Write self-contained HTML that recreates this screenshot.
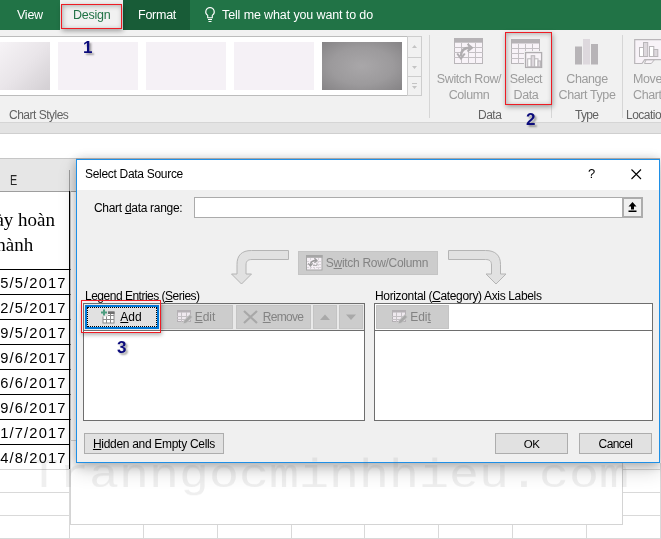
<!DOCTYPE html>
<html><head><meta charset="utf-8">
<style>
*{box-sizing:border-box;margin:0;padding:0}
html,body{width:661px;height:539px;overflow:hidden;background:#fff}
body{position:relative;font-family:"Liberation Sans",sans-serif;font-size:12px;color:#000}
.abs{position:absolute}
#tabs{left:0;top:0;width:661px;height:30px;background:#217346}
.tab{position:absolute;top:0;height:30px;line-height:31px;color:#fff;font-size:12.5px;letter-spacing:-0.25px;white-space:nowrap}
#ribbon{left:0;top:30px;width:661px;height:93px;background:#f1f1f1;border-bottom:1px solid #d5d5d5}
#gallery{left:-5px;top:36px;width:413px;height:60px;background:#fff;border:1px solid #bcbcbc}
.thumb{position:absolute;top:42px;height:48px;background:#f5f1f6}
.glabel{position:absolute;top:108px;font-size:12px;letter-spacing:-0.5px;color:#626262;white-space:nowrap}
.rbtn{position:absolute;color:#9c9c9c;font-size:12.5px;letter-spacing:-0.4px;line-height:16px;text-align:center;white-space:nowrap}
.sep{position:absolute;top:35px;height:83px;width:1px;background:#d6d6d6}
.num{position:absolute;font-weight:bold;color:#0b0b7c;font-size:17px;line-height:17px;text-shadow:2px 2px 2px rgba(0,0,0,.35)}
.redbox{position:absolute;border:1px solid #ee1c24;box-shadow:1px 2px 5px rgba(0,0,0,.35),inset 1px 1px 5px rgba(0,0,0,.28)}
#band{left:0;top:123px;width:661px;height:11px;background:#e3e3e3;border-bottom:1px solid #cfcfcf}
.cell{position:absolute;left:-2px;width:73px;height:25px;border-right:1px solid #bdbdbd;border-bottom:1px solid #000;font-size:14.7px;letter-spacing:1.15px;white-space:nowrap;overflow:hidden}
.cell:after,.hc:after{content:"";position:absolute;right:0;top:0;bottom:-1px;width:1px;background:#000}
.cell span{position:absolute;right:3.4px;top:0;line-height:27px}
.gl{position:absolute;background:#d9d9d9}
#dlg{left:76px;top:158px;width:584px;height:305px;background:#f0f0f0;border:1px solid #1e8fe6;box-shadow:0 2px 10px rgba(0,0,0,.24),0 8px 18px rgba(0,0,0,.16);letter-spacing:-0.3px}
#dlg .title{position:absolute;left:0;top:0;width:582px;height:31px;background:#fff}
.btn{position:absolute;background:#e1e1e1;border:1px solid #adadad;font-size:12px;text-align:center;line-height:19px;height:21px;white-space:nowrap}
.dis{background:#cccccc;border-color:#c4c4c4;color:#838383}
.lbl{position:absolute;font-size:12px;white-space:nowrap}
.box{position:absolute;background:#fff;border:1px solid #6e6e6e}
u{text-decoration:underline}
#wm{left:29px;top:446px;font-family:"Liberation Mono",monospace;font-size:50px;color:rgba(110,110,110,.115);white-space:nowrap;line-height:56px;transform:scaleY(.82);transform-origin:0 41.3px}
#all{position:absolute;left:0;top:0;width:661px;height:539px;will-change:transform}
</style></head><body><div id="all">

<!-- sheet -->
<div class="abs" style="left:0;top:133px;width:661px;height:406px;background:#fff"></div>
<div class="abs" style="left:0;top:158px;width:76px;height:34px;background:#e6e6e6;border-bottom:1px solid #9e9e9e;border-top:1px solid #c6c6c6"></div>
<div class="abs" style="left:69px;top:170px;width:1px;height:21px;background:#9e9e9e"></div>
<div class="abs" style="left:10px;top:171px;font-size:15px;color:#262626;transform:scaleX(.72);transform-origin:left">E</div>
<div class="abs hc" style="left:-2px;top:191px;width:73px;height:79px;border-right:1px solid #bdbdbd;border-bottom:1px solid #000;font-family:'Liberation Serif',serif;font-size:19px;line-height:25px;padding-top:16px;white-space:nowrap"><span style="position:absolute;right:15px;top:16px">ày hoàn</span><span style="position:absolute;left:-7px;top:41px">thành</span></div>
<div class="cell" style="top:270px"><span>25/5/2017</span></div>
<div class="cell" style="top:295px"><span>22/5/2017</span></div>
<div class="cell" style="top:320px"><span>29/5/2017</span></div>
<div class="cell" style="top:345px"><span>19/6/2017</span></div>
<div class="cell" style="top:370px"><span>16/6/2017</span></div>
<div class="cell" style="top:395px"><span>19/6/2017</span></div>
<div class="cell" style="top:420px"><span>11/7/2017</span></div>
<div class="cell" style="top:445px"><span>14/8/2017</span></div>
<!-- gridlines bottom -->
<div class="gl" style="left:0;top:492px;width:661px;height:1px"></div>
<div class="gl" style="left:0;top:515px;width:661px;height:1px"></div>
<div class="gl" style="left:0;top:469px;width:661px;height:1px"></div>
<div class="gl" style="left:0;top:538px;width:661px;height:1px"></div>
<div class="gl" style="left:69px;top:470px;width:1px;height:69px"></div>
<div class="gl" style="left:143px;top:470px;width:1px;height:69px"></div>
<div class="gl" style="left:217px;top:470px;width:1px;height:69px"></div>
<div class="gl" style="left:291px;top:470px;width:1px;height:69px"></div>
<div class="gl" style="left:364px;top:470px;width:1px;height:69px"></div>
<div class="gl" style="left:438px;top:470px;width:1px;height:69px"></div>
<div class="gl" style="left:512px;top:470px;width:1px;height:69px"></div>
<div class="gl" style="left:586px;top:470px;width:1px;height:69px"></div>
<div class="gl" style="left:660px;top:463px;width:1px;height:76px"></div>
<!-- chart area -->
<div class="abs" style="left:70px;top:440px;width:553px;height:85px;background:#fff;border:1px solid #d4d4d4"></div>

<!-- tabs -->
<div id="tabs" class="abs"></div>
<div class="tab" style="left:17px">View</div>
<div class="tab" style="left:60px;width:63px;background:#f1f1f1;color:#217346;padding-left:13px">Design</div>
<div class="tab" style="left:123px;width:67px;background:#185c37;padding-left:15px">Format</div>
<div class="tab" style="left:222px;letter-spacing:-0.12px">Tell me what you want to do</div>
<svg class="abs" style="left:203px;top:6px" width="14" height="18" viewBox="0 0 14 18"><path d="M7 1.5a4.3 4.3 0 0 0-2.3 7.9v2.3h4.6v-2.3A4.3 4.3 0 0 0 7 1.5z" fill="none" stroke="#fff" stroke-width="1.1"/><path d="M5 13.5h4M5.5 15.5h3" stroke="#fff" stroke-width="1"/></svg>

<!-- ribbon -->
<div id="ribbon" class="abs"></div>
<div id="gallery" class="abs"></div>
<div class="thumb" style="left:0;width:50px;background:linear-gradient(135deg,#f6f3f6 0%,#e9e5e9 50%,#d3cfd3 100%)"></div>
<div class="thumb" style="left:58px;width:80px"></div>
<div class="thumb" style="left:146px;width:80px"></div>
<div class="thumb" style="left:234px;width:80px"></div>
<div class="thumb" style="left:322px;width:80px;background:radial-gradient(ellipse at center,#a9a7a9 0%,#9c9a9c 55%,#858385 100%)"></div>
<div class="abs" style="left:407px;top:36px;width:15px;height:60px;background:#f1f1f1;border:1px solid #cdcdcd"></div>
<div class="abs" style="left:407px;top:57px;width:15px;height:1px;background:#cdcdcd"></div>
<div class="abs" style="left:407px;top:76px;width:15px;height:1px;background:#cdcdcd"></div>
<svg class="abs" style="left:407px;top:36px" width="15" height="60"><path d="M5 12l2.5-3 2.5 3zM5 30l2.5 3 2.5-3zM5 50l2.5 3 2.5-3z" fill="#c4c4c4"/><path d="M5 47.5h5" stroke="#c4c4c4"/></svg>
<div class="glabel" style="left:9px">Chart Styles</div>
<div class="sep" style="left:429px"></div>
<div class="sep" style="left:551px"></div>
<div class="sep" style="left:622px"></div>
<div class="rbtn" style="left:432px;top:71px;width:74px">Switch Row/<br>Column</div>
<div class="rbtn" style="left:506px;top:71px;width:40px">Select<br>Data</div>
<div class="rbtn" style="left:553px;top:71px;width:68px">Change<br>Chart Type</div>
<div class="rbtn" style="left:633px;top:71px;width:40px;text-align:left">Move<br>Chart</div>
<div class="glabel" style="left:478px">Data</div>
<div class="glabel" style="left:575px;letter-spacing:-0.7px">Type</div>
<div class="glabel" style="left:626px">Locatio</div>
<!-- icons -->
<svg class="abs" style="left:454px;top:38px" width="30" height="27"><rect x=".5" y=".5" width="28" height="25" fill="#f8f3f8" stroke="#b9b6b9"/><rect x="0" y="0" width="29" height="4.7" fill="#b5b2b5"/><path d="M0 9.5h29M0 14.5h29M0 19.5h29M7.5 5v21M14.5 5v21M21.5 5v21" stroke="#c4c0c4"/><rect x="8" y="10" width="13" height="9" fill="#f8f3f8"/><rect x="14.5" y="9.5" width="7" height="10" fill="none" stroke="#c4c0c4"/><path d="M14.5 14.5h7" stroke="#c4c0c4"/><path d="M7 18C7 12.5 10 9.8 16 9.8" fill="none" stroke="#b0adb0" stroke-width="2.4"/><path d="M3.2 15.5L7 20.5l3.8-5M13.5 6l4.5 3.8-4.5 3.8" fill="none" stroke="#b0adb0" stroke-width="2"/></svg>
<svg class="abs" style="left:511px;top:39px" width="32" height="30"><rect x=".5" y=".5" width="28" height="24" fill="#f8f3f8" stroke="#b9b6b9"/><rect x="0" y="0" width="29" height="4.5" fill="#b5b2b5"/><path d="M0 9.5h29M0 14.5h29M0 19.5h29M7.5 5v20M14.5 5v20M21.5 5v20" stroke="#c4c0c4"/><rect x="13" y="12" width="19" height="18" fill="#f1f1f1"/><rect x="14.6" y="13.6" width="16" height="14.8" fill="#f8f4f8" stroke="#b0adb0" stroke-width="1.3"/><rect x="16.7" y="19.8" width="3.5" height="8" fill="#fff" stroke="#b9b6b9"/><rect x="20.2" y="16.7" width="3.5" height="11.1" fill="#ddd8dd" stroke="#b9b6b9"/><rect x="23.7" y="19.8" width="3.3" height="8" fill="#fff" stroke="#b9b6b9"/><rect x="27" y="21.9" width="2.5" height="5.9" fill="#ddd8dd" stroke="#b9b6b9"/></svg>
<svg class="abs" style="left:575px;top:38px" width="25" height="28"><rect x="0" y="8.5" width="7" height="18" fill="#b7b4b7"/><rect x="8" y="1" width="7" height="25.5" fill="#ddd8dd"/><rect x="16" y="6" width="7" height="20.5" fill="#b7b4b7"/></svg>
<svg class="abs" style="left:634px;top:39px" width="30" height="26"><path d="M.7 .7h30v20H10.7l-2.7 3.8H.7z" fill="#f8f3f8" stroke="#b9b6b9" stroke-width="1.2"/><path d="M10.5 24.5l1.5-3.6h8.3l-3 3.6z" fill="#f8f3f8" stroke="#b9b6b9"/><rect x="5.5" y="8.5" width="4" height="9" fill="#fff" stroke="#b9b6b9"/><rect x="9.5" y="3.5" width="4.2" height="14" fill="#ddd8dd" stroke="#b9b6b9"/><rect x="15.5" y="7.5" width="4.3" height="10" fill="#fff" stroke="#b9b6b9"/><rect x="19.8" y="10.5" width="4" height="7" fill="#ddd8dd" stroke="#b9b6b9"/></svg>
<div class="redbox" style="left:505px;top:32px;width:47px;height:73px"></div>
<div id="band" class="abs"></div>
<div class="redbox" style="left:61px;top:4px;width:61px;height:25px"></div>
<div class="num" style="left:83px;top:39px">1</div>
<div class="num" style="left:526px;top:111px">2</div>

<!-- dialog -->
<div id="dlg" class="abs">
 <div class="title"></div>
 <div class="abs" style="left:-1px;top:-1px;width:584px;height:1px;background:#aaa6a4"></div>
 <div class="abs" style="left:-1px;top:0;width:584px;height:1px;background:#1e8fe6"></div>
 <div class="lbl" style="left:8px;top:8px">Select Data Source</div>
 <div class="lbl" style="left:511px;top:7px;font-size:13px">?</div>
 <svg class="abs" style="left:554px;top:10px" width="12" height="12"><path d="M.5 .5l9.5 9.5M10 .5l-9.5 9.5" stroke="#000" stroke-width="1.1"/></svg>
 <div class="lbl" style="left:17px;top:42px">Chart <u>d</u>ata range:</div>
 <div class="box" style="left:117px;top:38px;width:449px;height:21px;border-color:#ababab"></div>
 <div class="abs" style="left:545px;top:38px;width:21px;height:21px;background:#f0f0f0;border:2px solid #adadad"></div>
 <svg class="abs" style="left:551px;top:43px" width="9" height="11"><path d="M4.5 0L.5 4.5h2.5v3h3v-3h2.5zM.5 8.5h8v1.5h-8z" fill="#000"/></svg>
 <!-- arrows -->
 <svg class="abs" style="left:150px;top:88px" width="70" height="42"><path d="M61.5 3.5h-37c-10 0-14.5 5-14.5 14v9.5h-5.5l10 10 10-10h-5.5v-9c0-4 2-5.5 6-5.5h36.5z" fill="#e1e1e1" stroke="#b4b4b4"/></svg>
 <svg class="abs" style="left:367px;top:88px" width="70" height="42"><path d="M4.5 3.5h37c10 0 15 5 15 14v9.5h5.5l-10 10-10-10h5.5v-9c0-4-2-5.5-6-5.5h-37z" fill="#e1e1e1" stroke="#b4b4b4"/></svg>
 <div class="btn dis" style="left:221px;top:92px;width:140px;height:24px;line-height:22px;padding-left:18px">S<u>w</u>itch Row/Column</div>
 <svg class="abs" style="left:229px;top:96px" width="17" height="16"><rect x=".5" y=".5" width="15.5" height="14.5" fill="#f6f1f6" stroke="#a6a6a6"/><rect x="0" y="0" width="16.5" height="2.8" fill="#a6a6a6"/><path d="M1 6.5h15M1 9.5h15M1 12.5h15M4.5 3v12M8.5 3v12M12.5 3v12" stroke="#d9d4d9" stroke-dasharray="2 1"/><path d="M4.5 10C4.5 7 6.5 5.5 10 5.5" fill="none" stroke="#9a9a9a" stroke-width="1.4"/><path d="M2.3 8.3l2.2 2.7 2.2-2.7M8.5 3.3l2.5 2.2-2.5 2.2" fill="none" stroke="#9a9a9a" stroke-width="1.2"/><path d="M7 10.5h4v-3" fill="none" stroke="#b4b4b4"/></svg>
 <div class="lbl" style="left:8px;top:130px;letter-spacing:-0.5px">Le<u>g</u>end Entries (<u>S</u>eries)</div>
 <div class="lbl" style="left:298px;top:130px;letter-spacing:-0.35px">Horizontal (<u>C</u>ategory) Axis Labels</div>
 <div class="box" style="left:6px;top:144px;width:282px;height:118px"></div>
 <div class="abs" style="left:7px;top:145px;width:280px;height:26px;background:#e9e9e9"></div>
 <div class="abs" style="left:6px;top:171px;width:282px;height:1px;background:#6e6e6e"></div>
 <div class="box" style="left:297px;top:144px;width:279px;height:118px"></div>
 <div class="abs" style="left:297px;top:171px;width:279px;height:1px;background:#6e6e6e"></div>
 <div class="btn" style="left:8px;top:146px;width:74px;height:24px;line-height:20px;border:2px solid #0078d7;padding-left:18px;outline:1px dotted #000;outline-offset:-3px;letter-spacing:0"><u>A</u>dd</div>
 <svg class="abs" style="left:23px;top:150px" width="16" height="15"><path d="M1 3.5h6M4 .5v6" stroke="#4d9d80" stroke-width="2"/><rect x="3" y="3" width="11" height="11" fill="#fff" stroke="#8a8a8a"/><path d="M3 6.5h11M3 10.5h11M6.5 3v11M10.5 3v11" stroke="#8a8a8a"/><rect x="8" y="2.5" width="6.5" height="2.5" fill="#6e6e6e"/><rect x="0" y="0" width="8" height="7.5" fill="#e1e1e1"/><path d="M1 3.5h6M4 .5v6" stroke="#4d9d80" stroke-width="2"/></svg>
 <div class="btn dis" style="left:84px;top:146px;width:72px;height:24px;line-height:22px;padding-left:16px;letter-spacing:0"><u>E</u>dit</div>
 <svg class="abs" style="left:100px;top:151px" width="16" height="15"><rect x=".5" y=".5" width="13" height="11" fill="#efe9ef" stroke="#b4b0b4"/><rect x=".5" y=".5" width="13" height="2" fill="#b4b0b4"/><path d="M0 6.5h14M0 9.5h14M4.5 2v10M9.5 2v10" stroke="#c4c0c4"/><path d="M6 14l1-3.5 6-6 2.5 2.5-6 6z" fill="#a9a9a9" stroke="#cccccc" stroke-width=".8"/></svg>
 <div class="btn dis" style="left:159px;top:146px;width:75px;height:24px;line-height:22px;padding-left:19px;letter-spacing:-0.7px"><u>R</u>emove</div>
 <div class="btn dis" style="left:236px;top:146px;width:24px;height:24px"></div>
 <div class="btn dis" style="left:262px;top:146px;width:24px;height:24px"></div>
 <svg class="abs" style="left:236px;top:146px" width="50" height="24"><path d="M7 15l5-5.5 5 5.5zM33 9.5l5 5.5 5-5.5z" fill="#a9a9a9"/></svg>
 <svg class="abs" style="left:166px;top:151px" width="16" height="14"><path d="M1 1l13 12M14 1l-13 12" stroke="#a8a8a8" stroke-width="2.2"/></svg>
 <div class="btn dis" style="left:299px;top:146px;width:73px;height:24px;line-height:22px;padding-left:16px;letter-spacing:0">Edi<u>t</u></div>
 <svg class="abs" style="left:315px;top:151px" width="16" height="15"><rect x=".5" y=".5" width="13" height="11" fill="#efe9ef" stroke="#b4b0b4"/><rect x=".5" y=".5" width="13" height="2" fill="#b4b0b4"/><path d="M0 6.5h14M0 9.5h14M4.5 2v10M9.5 2v10" stroke="#c4c0c4"/><path d="M6 14l1-3.5 6-6 2.5 2.5-6 6z" fill="#a9a9a9" stroke="#cccccc" stroke-width=".8"/></svg>
 <div class="btn" style="left:7px;top:274px;width:140px;height:21px;line-height:20px"><u>H</u>idden and Empty Cells</div>
 <div class="btn" style="left:418px;top:274px;width:73px;height:21px;line-height:20px;letter-spacing:-0.5px;font-size:11.5px">OK</div>
 <div class="btn" style="left:502px;top:274px;width:73px;height:21px;line-height:20px;letter-spacing:-0.6px">Cancel</div>
</div>
<div class="redbox" style="left:81px;top:300px;width:80px;height:33px;box-shadow:1px 2px 4px rgba(0,0,0,.3)"></div>
<div class="num" style="left:117px;top:339px">3</div>
<div id="wm" class="abs">Tranngocminhhieu.com</div>
</div></body></html>
